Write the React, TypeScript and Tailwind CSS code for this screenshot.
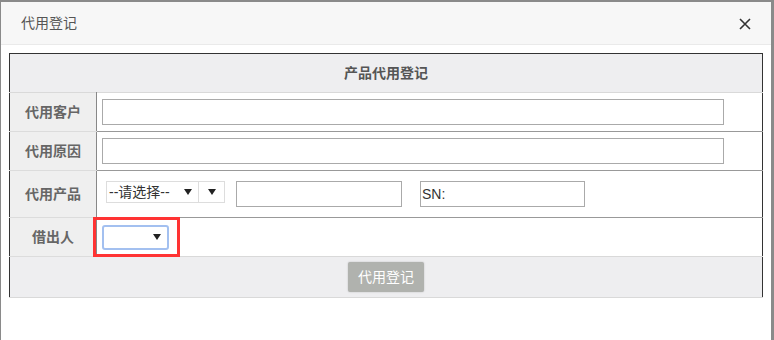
const font = { fontFamily: '"Liberation Sans", "Noto Sans CJK SC", sans-serif' };

const Caret = () => (
  <svg width="8" height="6" viewBox="0 0 8 6" className="shrink-0">
    <path d="M0 0h8L4 6z" fill="#222" />
  </svg>
);

const Label = ({ children }: { children: React.ReactNode }) => (
  <td className="w-[87px] border-b border-r border-b-[#dcdcdc] border-r-[#888] bg-[#efefef] text-center text-[14px] font-bold text-[#666]">
    {children}
  </td>
);

export default function App() {
  return (
    <div
      className="h-[340px] w-[774px] overflow-hidden bg-[#8a8a8a] pl-[1px] pt-[2px]"
      style={font}
    >
      <div className="h-[338px] w-[770px] bg-white">
        <div className="flex h-[43px] items-center justify-between border-b border-[#eaeaea] bg-[#f7f7f7] pl-[20px] pr-[20px]">
          <span className="text-[14px] text-[#555]">代用登记</span>
          <svg width="12" height="12" viewBox="0 0 12 12" className="mt-[1px]">
            <path d="M1 1l10 10M11 1L1 11" stroke="#333" strokeWidth="1.6" />
          </svg>
        </div>

        <div className="relative ml-[8px] mt-[8px] w-[754px]">
          <table className="w-full border-collapse border-x border-t border-[#333]">
            <tbody>
              <tr className="h-[39px] border-b border-[#d9d9d9] bg-[#eeeef0]">
                <td colSpan={2} className="text-center text-[14px] font-bold text-[#555]">
                  产品代用登记
                </td>
              </tr>
              <tr className="h-[39px]">
                <Label>代用客户</Label>
                <td className="border-b border-[#999] pl-[5px]">
                  <div className="h-[26px] w-[622px] border border-[#aaa]" />
                </td>
              </tr>
              <tr className="h-[39px]">
                <Label>代用原因</Label>
                <td className="border-b border-[#999] pl-[5px]">
                  <div className="h-[26px] w-[622px] border border-[#aaa]" />
                </td>
              </tr>
              <tr className="h-[47px]">
                <Label>代用产品</Label>
                <td className="border-b border-[#999] pl-[9px]">
                  <div className="flex items-start">
                    <div className="flex h-[22px] w-[93px] items-center justify-between border border-[#ddd] pl-[2px] pr-[6px] text-[14px] text-[#333]">
                      <span>--请选择--</span>
                      <Caret />
                    </div>
                    <div className="flex h-[22px] w-[26px] items-center justify-center border border-l-0 border-[#ddd]">
                      <Caret />
                    </div>
                    <div className="ml-[11px] h-[26px] w-[166px] border border-[#aaa]" />
                    <div className="ml-[18px] flex h-[26px] w-[165px] items-center border border-[#aaa] pl-[1px] text-[14px] text-[#333]">
                      SN:
                    </div>
                  </div>
                </td>
              </tr>
              <tr className="h-[39px] border-b border-[#d9d9d9]">
                <Label>借出人</Label>
                <td className="pl-[5px]">
                  <div className="flex h-[25px] w-[67px] items-center justify-end rounded-[3px] border-2 border-[#a3c0f0] pr-[6px]">
                    <Caret />
                  </div>
                </td>
              </tr>
              <tr className="h-[41px] border-b border-[#d9d9d9] bg-[#eeeef0]">
                <td colSpan={2} className="text-center">
                  <button className="h-[30px] w-[76px] rounded-[2px] bg-[#b0b2ae] text-[14px] text-white shadow-[0_0_2px_rgba(0,0,0,0.2)]">
                    代用登记
                  </button>
                </td>
              </tr>
            </tbody>
          </table>
          <div className="pointer-events-none absolute left-[84px] top-[164px] h-[40px] w-[87px] border-[3px] border-[#f33]" />
        </div>
      </div>
    </div>
  );
}
